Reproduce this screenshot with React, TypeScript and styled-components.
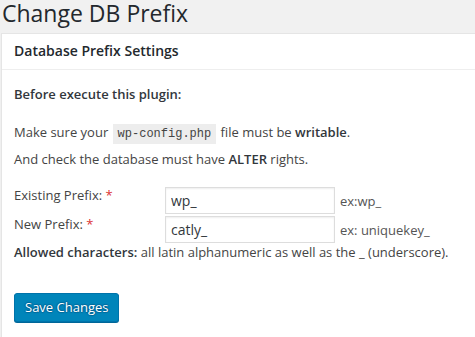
import React from 'react';
import styled, { createGlobalStyle } from 'styled-components';

const GlobalStyle = createGlobalStyle`
  html, body {
    margin: 0;
    padding: 0;
    background: #f1f1f1;
    overflow: hidden;
  }
  body {
    font-family: "Open Sans", "Liberation Sans", sans-serif;
    font-size: 13px;
    color: #444;
  }
`;

const Page = styled.div`
  width: 560px;
  padding-left: 1px;
`;

const Title = styled.h1`
  margin: 0 0 6px 1px;
  font-size: 23px;
  font-weight: 400;
  line-height: 27px;
  color: #23282d;
`;

const Postbox = styled.div`
  background: #fff;
  border: 1px solid #e5e5e5;
  box-shadow: 0 1px 1px rgba(0, 0, 0, 0.04);
`;

const Handle = styled.h2`
  margin: 0;
  padding: 7px 12px 8px;
  font-size: 14px;
  font-weight: 600;
  line-height: 20px;
  color: #23282d;
  border-bottom: 1px solid #eee;
`;

const Inside = styled.div`
  padding: 0 12px 12px;
`;

const Para = styled.p<{ $top: number; $lh: number }>`
  margin: ${(p) => p.$top}px 0 0;
  line-height: ${(p) => p.$lh}px;
`;

const Strong = styled.strong`
  font-weight: 600;
  color: #32373c;
`;

const Code = styled.code`
  padding: 3px 5px 3px;
  margin: 0 1px;
  background: rgba(0, 0, 0, 0.07);
  font-family: "Liberation Mono", "DejaVu Sans Mono", monospace;
  font-size: 12px;
  color: #444;
`;

const Form = styled.div`
  margin-top: 13px;
  display: flex;
  flex-direction: column;
`;

const Row = styled.div`
  display: flex;
  align-items: flex-start;
  height: 29px;
`;

const Label = styled.label`
  width: 151px;
  padding-top: 1px;
  line-height: 19.5px;
  color: #444;
`;

const Required = styled.span`
  color: #dc3232;
`;

const Field = styled.div`
  display: flex;
  align-items: center;
  margin-top: 2px;
  gap: 5px;
`;

const Input = styled.input`
  box-sizing: border-box;
  width: 170px;
  height: 27px;
  margin: 0;
  padding: 2px 5px;
  border: 1px solid #ddd;
  border-radius: 0;
  box-shadow: inset 0 1px 2px rgba(0, 0, 0, 0.07);
  background: #fff;
  font-family: "Open Sans", "Liberation Sans", sans-serif;
  font-size: 14px;
  color: #32373c;
  outline: none;
`;

const Hint = styled.span`
  color: #555;
`;

const Note = styled.p`
  margin: 0;
  line-height: 19.5px;
`;

const Submit = styled.p`
  margin: 20px 0 0;
  padding: 10px 0;
`;

const Button = styled.button`
  height: 29px;
  padding: 0 10px 1px;
  border: 1px solid #0073aa;
  border-radius: 3px;
  background: #0085ba;
  box-shadow: 0 1px 0 #006799;
  color: #fff;
  font-family: "Open Sans", "Liberation Sans", sans-serif;
  font-size: 13px;
  line-height: 26px;
  text-shadow: 0 -1px 1px #006799, 1px 0 1px #006799, 0 1px 1px #006799, -1px 0 1px #006799;
  cursor: pointer;
`;

const App: React.FC = () => {
  return (
    <Page>
      <GlobalStyle />
      <Title>Change DB Prefix</Title>
      <Postbox>
        <Handle>Database Prefix Settings</Handle>
        <Inside>
          <Para $top={14} $lh={20}>
            <Strong>Before execute this plugin:</Strong>
          </Para>
          <Para $top={16} $lh={25}>
            Make sure your <Code>wp-config.php</Code> file must be <Strong>writable</Strong>.
            <br />
            And check the database must have <Strong>ALTER</Strong> rights.
          </Para>

          <Form>
            <Row>
              <Label htmlFor="old-prefix">
                Existing Prefix: <Required>*</Required>
              </Label>
              <Field>
                <Input id="old-prefix" type="text" defaultValue="wp_" />
                <Hint>ex:wp_</Hint>
              </Field>
            </Row>
            <Row>
              <Label htmlFor="new-prefix">
                New Prefix: <Required>*</Required>
              </Label>
              <Field>
                <Input id="new-prefix" type="text" defaultValue="catly_" />
                <Hint>ex: uniquekey_</Hint>
              </Field>
            </Row>
          </Form>

          <Note>
            <Strong>Allowed characters:</Strong> all latin alphanumeric as well as the _ (underscore).
          </Note>

          <Submit>
            <Button type="button">Save Changes</Button>
          </Submit>
        </Inside>
      </Postbox>
    </Page>
  );
};

export default App;
